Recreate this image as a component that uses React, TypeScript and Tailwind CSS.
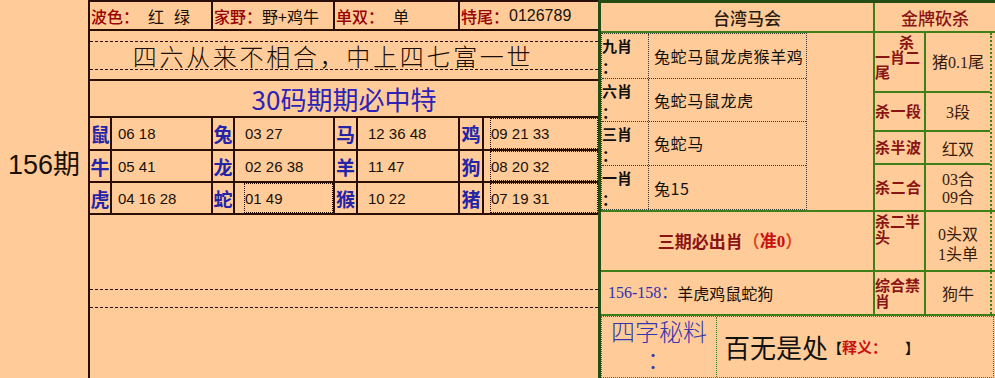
import React from 'react';

const SANS = "font-['Noto_Sans_CJK_SC',sans-serif]";
const NUM = "font-['Liberation_Sans','Noto_Sans_CJK_SC',sans-serif]";
const SERIF_NUM = "font-['Liberation_Serif','Noto_Sans_CJK_SC',serif]";

const SHENGXIAO = [
    [
        { label: '鼠', nums: '06 18' },
        { label: '兔', nums: '03 27' },
        { label: '马', nums: '12 36 48' },
        { label: '鸡', nums: '09 21 33' },
    ],
    [
        { label: '牛', nums: '05 41' },
        { label: '龙', nums: '02 26 38' },
        { label: '羊', nums: '11 47' },
        { label: '狗', nums: '08 20 32' },
    ],
    [
        { label: '虎', nums: '04 16 28' },
        { label: '蛇', nums: '01 49' },
        { label: '猴', nums: '10 22' },
        { label: '猪', nums: '07 19 31' },
    ],
];

const COLS = [
    { label: 'w-[22px]', nums: 'w-[101px] pl-[6px]' },
    { label: 'w-[22px]', nums: 'w-[100px] pl-[10px]' },
    { label: 'w-[23px]', nums: 'w-[102px] pl-[10px]' },
    { label: 'w-[24px]', nums: 'flex-1 pl-[7px]' },
];

const ROW_H = ['h-[33px]', 'h-[32px]', 'h-[32px]'];

const XIAO = [
    { label: '九肖', value: '兔蛇马鼠龙虎猴羊鸡', h: 'h-[46px]' },
    { label: '六肖', value: '兔蛇马鼠龙虎', h: 'h-[43px]' },
    { label: '三肖', value: '兔蛇马', h: 'h-[45px]' },
    { label: '一肖', value: '兔15', h: 'flex-1' },
];

function isDotted(row: number, col: number) {
    return col === 3 || (row === 2 && col === 1);
}

function KillRow({ h, label, children, last }: { h: string; label: React.ReactNode; children: React.ReactNode; last?: boolean }) {
    return (
        <div className={`${h} flex ${last ? '' : 'border-b-2 border-[#3f7f1a]'}`}>
            <div className="w-[51px] border-r-2 border-[#3f7f1a] text-[#8a1414] font-bold text-[15px]">{label}</div>
            <div className="flex-1 flex items-center justify-center text-center text-[16px] text-[#3a1a0a]">{children}</div>
        </div>
    );
}

export default function App() {
    return (
        <div className={`w-[995px] h-[378px] overflow-hidden bg-[#ffcc99] flex ${SANS} text-[#1a1008]`}>
            {/* 期数 */}
            <div className="w-[90px] border-r-2 border-[#2a0e04] pt-[148px] text-center">
                <span className={`text-[27px] leading-[34px] ${NUM}`}>156期</span>
            </div>

            {/* 左表 */}
            <div className="w-[508px] flex flex-col border-t-2 border-[#2a0e04]">
                <div className="h-[29px] flex border-b-2 border-[#2a0e04] text-[16px] leading-none">
                    <div className="w-[123px] border-r-2 border-[#2a0e04] flex items-center pl-[1px]">
                        <span className="text-[#990000] font-medium">波色：</span>
                        <span className="ml-[9px]">红</span>
                        <span className="ml-[10px]">绿</span>
                    </div>
                    <div className="w-[122px] border-r-2 border-[#2a0e04] flex items-center pl-[1px]">
                        <span className="text-[#990000] font-medium">家野：</span>
                        <span>野+鸡牛</span>
                    </div>
                    <div className="w-[125px] border-r-2 border-[#2a0e04] flex items-center pl-[1px]">
                        <span className="text-[#990000] font-medium">单双：</span>
                        <span className="ml-[9px]">单</span>
                    </div>
                    <div className="flex-1 flex items-center pl-[1px]">
                        <span className="text-[#990000] font-medium">特尾：</span>
                        <span className={NUM}>0126789</span>
                    </div>
                </div>

                <div className="h-[50px] border-b-2 border-[#2a0e04] pt-[10px]">
                    <div className="h-[29px] border-y border-dashed border-[#2a0e04] flex items-center justify-center pr-[22px] text-[24px] font-light tracking-[2.7px] text-[#1a0e06] leading-none">
                        四六从来不相合，中上四七富一世
                    </div>
                </div>

                <div className="h-[37px] border-b-2 border-[#2a0e04] flex items-center justify-center text-[26px] text-[#2d22b8] leading-none">
                    30码期期必中特
                </div>

                {SHENGXIAO.map((row, r) => (
                    <div key={r} className={`${ROW_H[r]} flex border-b-2 border-[#2a0e04]`}>
                        {row.map((cell, c) => (
                            <React.Fragment key={cell.label}>
                                <div className={`${COLS[c].label} border-r-2 border-[#2a0e04] flex items-center justify-center text-[19px] font-bold text-[#2424a8] leading-none`}>
                                    {cell.label}
                                </div>
                                <div className={`${COLS[c].nums} ${c < 3 ? 'border-r-2 border-[#2a0e04]' : ''} flex`}>
                                    <div className={`flex-1 flex items-center text-[15px] leading-none ${NUM} ${isDotted(r, c) ? 'border border-dotted border-[#2a0e04] -ml-[1px]' : ''}`}>
                                        {cell.nums}
                                    </div>
                                </div>
                            </React.Fragment>
                        ))}
                    </div>
                ))}

                <div className="flex-1 pt-[74px]">
                    <div className="h-[19px] border-y border-dashed border-[#2a0e04]" />
                </div>
            </div>

            {/* 右表 */}
            <div className="w-[397px] border-l-[3px] border-t-[3px] border-[#234d12] flex flex-col">
                <div className="h-[30px] flex border-b-2 border-[#3f7f1a] text-[17px] leading-none">
                    <div className="w-[274px] border-r-2 border-[#3f7f1a] flex items-center justify-center pl-[20px] font-medium text-[#2a1a10]">
                        台湾马会
                    </div>
                    <div className="flex-1 flex items-center justify-center text-[#8a1414] font-medium">金牌砍杀</div>
                </div>

                <div className="h-[179px] flex border-b-2 border-[#3f7f1a]">
                    <div className="w-[274px] border-r-2 border-[#3f7f1a]">
                        <div className="w-[206px] h-full border border-dotted border-[#3a3a3a] flex flex-col">
                            {XIAO.map((x, i) => (
                                <div key={x.label} className={`${x.h} flex ${i < 3 ? 'border-b border-dotted border-[#3a3a3a]' : ''}`}>
                                    <div className="w-[47px] border-r border-dotted border-[#3a3a3a] pt-[1px] text-[15px] font-bold leading-[21px] text-[#111]">
                                        {x.label}
                                        <br />：
                                    </div>
                                    <div className="flex-1 flex items-center pl-[5px] text-[16px] tracking-[0.6px] text-[#111]">
                                        {x.value}
                                    </div>
                                </div>
                            ))}
                        </div>
                    </div>
                    <div className="flex-1 mr-[3px] border-r-2 border-dotted border-[#3f7f1a] flex flex-col">
                        <KillRow
                            h="h-[60px]"
                            label={
                                <div className="pt-[1px] leading-[15px]">
                                    <div className="pl-[24px]">杀</div>
                                    <div>一肖二</div>
                                    <div>尾</div>
                                </div>
                            }
                        >
                            <span>
                                猪<span className={SERIF_NUM}>0.1</span>尾
                            </span>
                        </KillRow>
                        <KillRow h="h-[39px]" label={<div className="h-full flex items-center tracking-[0.5px]">杀一段</div>}>
                            <span>
                                <span className={SERIF_NUM}>3</span>段
                            </span>
                        </KillRow>
                        <KillRow h="h-[33px]" label={<div className="h-full flex items-center tracking-[0.5px]">杀半波</div>}>
                            红双
                        </KillRow>
                        <KillRow h="flex-1" last label={<div className="h-full flex items-center tracking-[0.5px]">杀二合</div>}>
                            <div className="leading-[17px]">
                                <span className={SERIF_NUM}>03</span>合
                                <br />
                                <span className={SERIF_NUM}>09</span>合
                            </div>
                        </KillRow>
                    </div>
                </div>

                <div className="h-[60px] flex border-b-2 border-[#3f7f1a]">
                    <div className="w-[274px] border-r-2 border-[#3f7f1a] flex items-center justify-center pr-[14px] text-[17px] font-bold">
                        <span className="text-[#8a1414]">三期必出肖</span>
                        <span className="text-[#d84a20]">（</span>
                        <span className="text-[#c81010]">
                            准<span className={SERIF_NUM}>0</span>
                        </span>
                        <span className="text-[#d84a20]">）</span>
                    </div>
                    <div className="flex-1 mr-[3px] border-r-2 border-dotted border-[#3f7f1a] flex">
                        <KillRow h="h-full flex-1" last label={<div className="pt-[1px] leading-[16px]">杀二半<br />头</div>}>
                            <div className="leading-[18px] pt-[6px]">
                                <span className={SERIF_NUM}>0</span>头双
                                <br />
                                <span className={SERIF_NUM}>1</span>头单
                            </div>
                        </KillRow>
                    </div>
                </div>

                <div className="h-[44px] flex border-b-2 border-[#3f7f1a]">
                    <div className="w-[274px] border-r-2 border-[#3f7f1a] flex items-center pl-[7px] text-[16px]">
                        <span className={`${SERIF_NUM} text-[#3030b0]`}>156-158：</span>
                        <span className="text-[#1a1008]">羊虎鸡鼠蛇狗</span>
                    </div>
                    <div className="flex-1 mr-[3px] border-r-2 border-dotted border-[#3f7f1a] flex">
                        <KillRow h="h-full flex-1" last label={<div className="h-full flex items-center leading-[16px]">综合禁<br />肖</div>}>
                            狗牛
                        </KillRow>
                    </div>
                </div>

                <div className="flex-1 flex border border-dotted border-[#3f7f1a] mr-[1px]">
                    <div className="w-[115px] border-r border-dotted border-[#3f7f1a] text-center text-[24px] font-light leading-[28px] text-[#3535b0]">
                        四字秘料
                        <br />：
                    </div>
                    <div className="flex-1 flex items-center pl-[7px]">
                        <span className="text-[26px] leading-none text-[#111]">百无是处</span>
                        <span className="text-[14px] font-bold text-[#111]">【</span>
                        <span className="text-[15px] font-bold text-[#c81010]">释义：</span>
                        <span className="ml-[18px] text-[14px] font-bold text-[#111]">】</span>
                    </div>
                </div>
            </div>
        </div>
    );
}
